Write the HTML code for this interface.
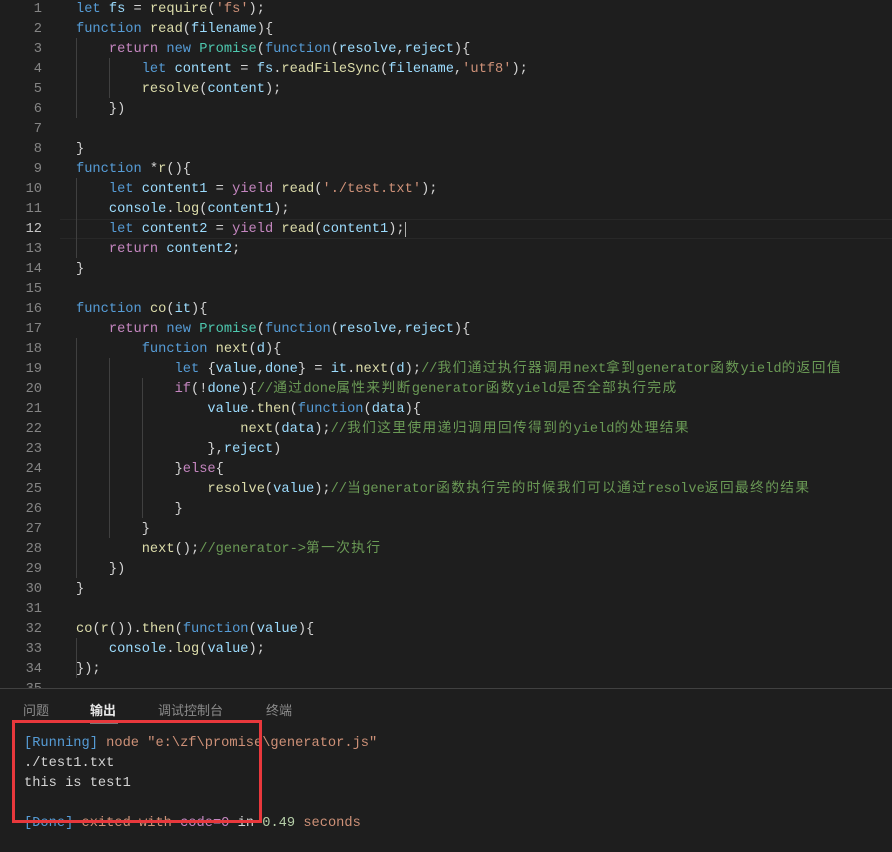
<!DOCTYPE html>
<html><head><meta charset="utf-8"><style>
body{margin:0;width:892px;height:851px;background:#1e1e1e;overflow:hidden;font-family:"Liberation Mono","Noto Sans CJK SC",monospace;font-size:13.7px;color:#d4d4d4}
.l{position:absolute;left:0;height:20px;line-height:20px;white-space:pre;width:892px}
.n{position:absolute;left:0;width:42px;text-align:right;color:#858585}
.c{position:absolute;left:76px}
.k{color:#569cd6}.p{color:#c586c0}.f{color:#dcdcaa}.v{color:#9cdcfe}.s{color:#ce9178}.t{color:#4ec9b0}.m{color:#6a9955}.g{color:#b5cea8}
i{font-style:normal;font-size:13.7px;letter-spacing:1.4px}
.cur{position:absolute;left:60px;right:0;top:219px;height:18px;border-top:1px solid #282828;border-bottom:1px solid #282828}
.guide{position:absolute;width:1px;background:#404040}
</style></head><body>
<div class="cur"></div>
<div class="guide" style="left:76px;top:38px;height:80px"></div>
<div class="guide" style="left:109px;top:58px;height:40px"></div>
<div class="guide" style="left:76px;top:178px;height:80px"></div>
<div class="guide" style="left:76px;top:338px;height:240px"></div>
<div class="guide" style="left:109px;top:358px;height:180px"></div>
<div class="guide" style="left:142px;top:378px;height:140px"></div>
<div class="guide" style="left:76px;top:638px;height:40px"></div>
<div class="l" style="top:0px"><span class="n">1</span><span class="c"><span class="k">let</span> <span class="v">fs</span> = <span class="f">require</span>(<span class="s">'fs'</span>);</span></div>
<div class="l" style="top:20px"><span class="n">2</span><span class="c"><span class="k">function</span> <span class="f">read</span>(<span class="v">filename</span>){</span></div>
<div class="l" style="top:40px"><span class="n">3</span><span class="c">    <span class="p">return</span> <span class="k">new</span> <span class="t">Promise</span>(<span class="k">function</span>(<span class="v">resolve</span>,<span class="v">reject</span>){</span></div>
<div class="l" style="top:60px"><span class="n">4</span><span class="c">        <span class="k">let</span> <span class="v">content</span> = <span class="v">fs</span>.<span class="f">readFileSync</span>(<span class="v">filename</span>,<span class="s">'utf8'</span>);</span></div>
<div class="l" style="top:80px"><span class="n">5</span><span class="c">        <span class="f">resolve</span>(<span class="v">content</span>);</span></div>
<div class="l" style="top:100px"><span class="n">6</span><span class="c">    })</span></div>
<div class="l" style="top:120px"><span class="n">7</span></div>
<div class="l" style="top:140px"><span class="n">8</span><span class="c">}</span></div>
<div class="l" style="top:160px"><span class="n">9</span><span class="c"><span class="k">function</span> *<span class="f">r</span>(){</span></div>
<div class="l" style="top:180px"><span class="n">10</span><span class="c">    <span class="k">let</span> <span class="v">content1</span> = <span class="p">yield</span> <span class="f">read</span>(<span class="s">'./test.txt'</span>);</span></div>
<div class="l" style="top:200px"><span class="n">11</span><span class="c">    <span class="v">console</span>.<span class="f">log</span>(<span class="v">content1</span>);</span></div>
<div class="l" style="top:220px"><span class="n" style="color:#c6c6c6">12</span><span class="c">    <span class="k">let</span> <span class="v">content2</span> = <span class="p">yield</span> <span class="f">read</span>(<span class="v">content1</span>);<span style="border-left:1px solid #aeafad"></span></span></div>
<div class="l" style="top:240px"><span class="n">13</span><span class="c">    <span class="p">return</span> <span class="v">content2</span>;</span></div>
<div class="l" style="top:260px"><span class="n">14</span><span class="c">}</span></div>
<div class="l" style="top:280px"><span class="n">15</span></div>
<div class="l" style="top:300px"><span class="n">16</span><span class="c"><span class="k">function</span> <span class="f">co</span>(<span class="v">it</span>){</span></div>
<div class="l" style="top:320px"><span class="n">17</span><span class="c">    <span class="p">return</span> <span class="k">new</span> <span class="t">Promise</span>(<span class="k">function</span>(<span class="v">resolve</span>,<span class="v">reject</span>){</span></div>
<div class="l" style="top:340px"><span class="n">18</span><span class="c">        <span class="k">function</span> <span class="f">next</span>(<span class="v">d</span>){</span></div>
<div class="l" style="top:360px"><span class="n">19</span><span class="c">            <span class="k">let</span> {<span class="v">value</span>,<span class="v">done</span>} = <span class="v">it</span>.<span class="f">next</span>(<span class="v">d</span>);<span class="m">//<i>我们通过执行器调用</i>next<i>拿到</i>generator<i>函数</i>yield<i>的返回值</i></span></span></div>
<div class="l" style="top:380px"><span class="n">20</span><span class="c">            <span class="p">if</span>(!<span class="v">done</span>){<span class="m">//<i>通过</i>done<i>属性来判断</i>generator<i>函数</i>yield<i>是否全部执行完成</i></span></span></div>
<div class="l" style="top:400px"><span class="n">21</span><span class="c">                <span class="v">value</span>.<span class="f">then</span>(<span class="k">function</span>(<span class="v">data</span>){</span></div>
<div class="l" style="top:420px"><span class="n">22</span><span class="c">                    <span class="f">next</span>(<span class="v">data</span>);<span class="m">//<i>我们这里使用递归调用回传得到的</i>yield<i>的处理结果</i></span></span></div>
<div class="l" style="top:440px"><span class="n">23</span><span class="c">                },<span class="v">reject</span>)</span></div>
<div class="l" style="top:460px"><span class="n">24</span><span class="c">            }<span class="p">else</span>{</span></div>
<div class="l" style="top:480px"><span class="n">25</span><span class="c">                <span class="f">resolve</span>(<span class="v">value</span>);<span class="m">//<i>当</i>generator<i>函数执行完的时候我们可以通过</i>resolve<i>返回最终的结果</i></span></span></div>
<div class="l" style="top:500px"><span class="n">26</span><span class="c">            }</span></div>
<div class="l" style="top:520px"><span class="n">27</span><span class="c">        }</span></div>
<div class="l" style="top:540px"><span class="n">28</span><span class="c">        <span class="f">next</span>();<span class="m">//generator-&gt;<i>第一次执行</i></span></span></div>
<div class="l" style="top:560px"><span class="n">29</span><span class="c">    })</span></div>
<div class="l" style="top:580px"><span class="n">30</span><span class="c">}</span></div>
<div class="l" style="top:600px"><span class="n">31</span></div>
<div class="l" style="top:620px"><span class="n">32</span><span class="c"><span class="f">co</span>(<span class="f">r</span>()).<span class="f">then</span>(<span class="k">function</span>(<span class="v">value</span>){</span></div>
<div class="l" style="top:640px"><span class="n">33</span><span class="c">    <span class="v">console</span>.<span class="f">log</span>(<span class="v">value</span>);</span></div>
<div class="l" style="top:660px"><span class="n">34</span><span class="c">});</span></div>
<div class="l" style="top:680px;height:8px;overflow:hidden"><span class="n">35</span></div>
<div style="position:absolute;left:0;top:688px;width:892px;height:163px;background:#1e1e1e;border-top:1px solid #414141"></div>
<div style="position:absolute;top:702px;left:23px;font-family:'Liberation Sans','Noto Sans CJK SC',sans-serif;font-size:13px;color:#8b8b8b;line-height:18px">问题</div>
<div style="position:absolute;top:702px;left:90px;font-family:'Liberation Sans','Noto Sans CJK SC',sans-serif;font-size:13px;color:#e7e7e7;line-height:18px;font-weight:bold">输出</div>
<div style="position:absolute;top:723px;left:90px;width:28px;height:1px;background:#777"></div>
<div style="position:absolute;top:702px;left:158px;font-family:'Liberation Sans','Noto Sans CJK SC',sans-serif;font-size:13px;color:#8b8b8b;line-height:18px">调试控制台</div>
<div style="position:absolute;top:702px;left:266px;font-family:'Liberation Sans','Noto Sans CJK SC',sans-serif;font-size:13px;color:#8b8b8b;line-height:18px">终端</div>
<div class="l" style="top:734px;left:24px"><span class="k">[Running]</span> <span class="s">node "e:\zf\promise\generator.js"</span></div>
<div class="l" style="top:754px;left:24px">./test1.txt</div>
<div class="l" style="top:774px;left:24px">this is test1</div>
<div class="l" style="top:814px;left:24px"><span class="k">[Done]</span> <span class="s">exited with</span> <span class="p">code=0</span> in <span class="g">0.49</span> <span class="s">seconds</span></div>
<div style="position:absolute;left:12px;top:720px;width:244px;height:97px;border:3px solid #e8383c"></div>
</body></html>
